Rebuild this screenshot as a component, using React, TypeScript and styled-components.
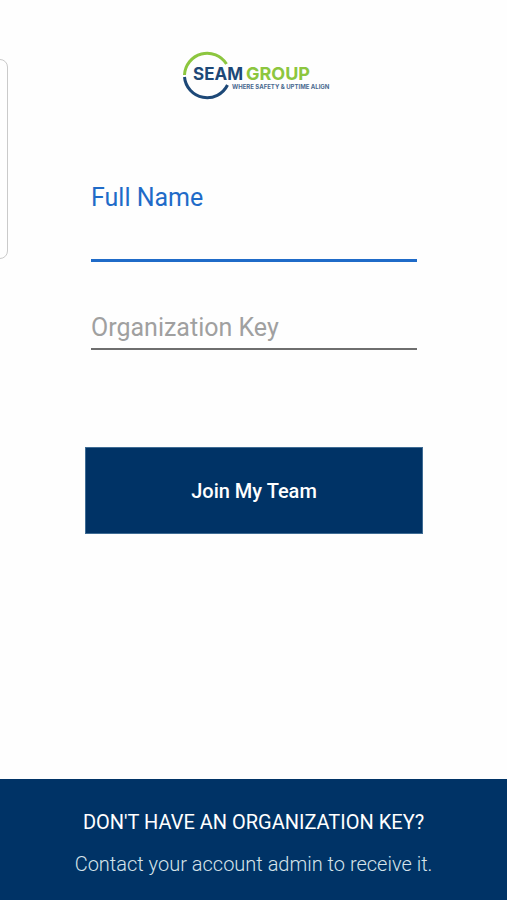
import React from "react";
import styled, { createGlobalStyle } from "styled-components";

const navy = "#003366";
const blue = "#1f6bc8";

const GlobalStyle = createGlobalStyle`
  *, *::before, *::after { box-sizing: border-box; }
  body {
    margin: 0;
    background: #fefefe;
    font-family: Roboto, "Liberation Sans", sans-serif;
  }
`;

const Screen = styled.div`
  position: relative;
  display: flex;
  flex-direction: column;
  min-height: 100vh;
  overflow: hidden;
`;

const EdgeHandle = styled.div`
  position: absolute;
  top: 59px;
  left: -12px;
  width: 20px;
  height: 200px;
  border: 1px solid #cacaca;
  border-radius: 8px;
`;

const Header = styled.header`
  display: flex;
  justify-content: center;
  padding: 48px 0 0 8px;
`;

const Logo = styled.svg`
  display: block;
  width: 152px;
  height: 56px;
`;

const Wordmark = styled.text<{ $size: number }>`
  font-family: Inter, sans-serif;
  font-size: ${(p) => p.$size}px;
  font-weight: 700;
`;

const Tagline = styled.text`
  font-family: Inter, sans-serif;
  font-size: 6px;
  font-weight: 700;
`;

const Form = styled.form`
  flex: 1;
  display: flex;
  flex-direction: column;
  padding: 76px 84px 48px 85px;
`;

const Field = styled.div`
  display: flex;
  flex-direction: column;
  margin: 0 6px;
`;

const Label = styled.label`
  font-size: 25px;
  line-height: 36px;
  color: ${blue};
`;

const Input = styled.input<{ $active?: boolean }>`
  width: 100%;
  height: ${(p) => (p.$active ? "46px" : "44px")};
  padding: 0;
  border: 0;
  border-bottom: ${(p) => (p.$active ? `3px solid ${blue}` : "2px solid #6e6e6e")};
  border-radius: 0;
  outline: none;
  background: transparent;
  font: inherit;
  font-size: 25px;
  color: #222;

  &::placeholder {
    color: #a0a0a0;
    opacity: 1;
  }
`;

const KeyField = styled(Field)`
  margin-top: 44px;
`;

const JoinButton = styled.button`
  height: 87px;
  margin-top: 97px;
  border: 1px solid #3f6c94;
  background: ${navy};
  color: #fff;
  font: inherit;
  font-size: 20px;
  font-weight: 500;
  cursor: pointer;
`;

const Footer = styled.footer`
  padding: 27px 16px 20px;
  background: ${navy};
  text-align: center;
`;

const FooterTitle = styled.h2`
  margin: 0 0 10px;
  font-size: 20px;
  line-height: 32px;
  font-weight: 400;
  color: #fff;
`;

const FooterText = styled.p`
  margin: 0;
  font-size: 20px;
  line-height: 32px;
  font-weight: 300;
  color: #d5e3ea;
`;

function SeamLogo() {
  return (
    <Logo viewBox="0 0 152 56" role="img" aria-label="SEAM Group, where safety and uptime align">
      <path d="M2.5 27 A22.7 22.7 0 0 1 44.5 16" fill="none" stroke="#8cc63f" strokeWidth="3" />
      <path d="M2.5 29 A22.7 22.7 0 0 0 45.5 37" fill="none" stroke="#1d4877" strokeWidth="3" />
      <Wordmark $size={17} x="11" y="32" fill="#1d4877">SEAM</Wordmark>
      <Wordmark $size={18} x="64" y="32" fill="#8cc63f">GROUP</Wordmark>
      <Tagline x="50" y="41" fill="#4a6a90">WHERE SAFETY &amp; UPTIME ALIGN</Tagline>
    </Logo>
  );
}

export default function App() {
  return (
    <>
      <GlobalStyle />
      <Screen>
        <EdgeHandle />
        <Header>
          <SeamLogo />
        </Header>
        <Form onSubmit={(e: React.FormEvent) => e.preventDefault()}>
          <Field>
            <Label htmlFor="full-name">Full Name</Label>
            <Input id="full-name" type="text" autoComplete="name" $active />
          </Field>
          <KeyField>
            <Input id="organization-key" type="text" aria-label="Organization Key" placeholder="Organization Key" />
          </KeyField>
          <JoinButton type="submit">Join My Team</JoinButton>
        </Form>
        <Footer>
          <FooterTitle>DON'T HAVE AN ORGANIZATION KEY?</FooterTitle>
          <FooterText>Contact your account admin to receive it.</FooterText>
        </Footer>
      </Screen>
    </>
  );
}
